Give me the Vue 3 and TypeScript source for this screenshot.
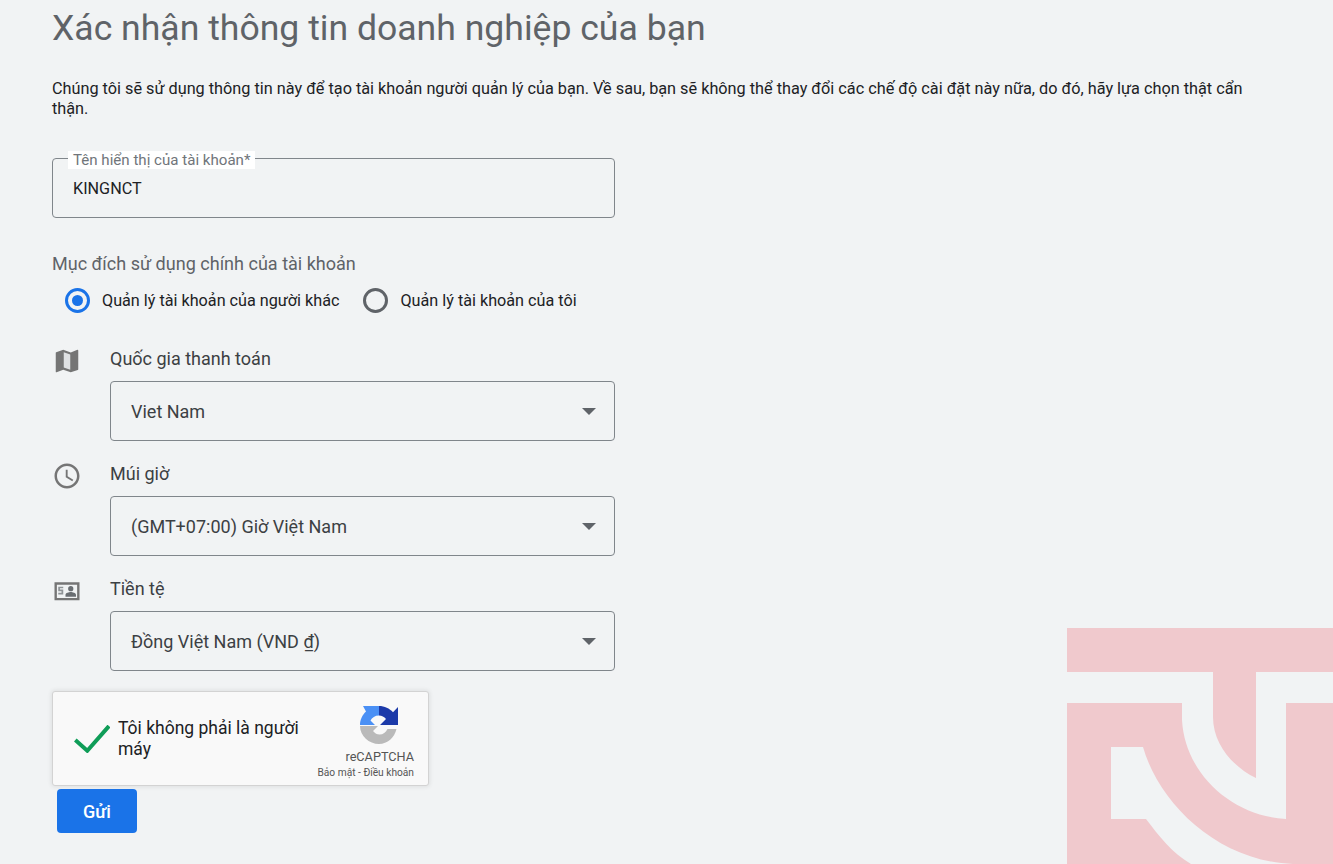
<script setup lang="ts">
interface Field { label: string; value: string; icon: string }
const fields: Field[] = [
  { label: 'Quốc gia thanh toán', value: 'Viet Nam', icon: 'map' },
  { label: 'Múi giờ', value: '(GMT+07:00) Giờ Việt Nam', icon: 'clock' },
  { label: 'Tiền tệ', value: 'Đồng Việt Nam (VND ₫)', icon: 'money' }
]
</script>

<template>
  <div class="page">
    <svg class="watermark" viewBox="0 0 266 236" aria-hidden="true">
      <path d="M0 0H266V44H189V150C168 140 146 118 146 89V44H0Z" />
      <path d="M0 75H115V92C118 146 165 188 219 191V75H266V236H226C150 233 92 175 76 119H44V191H79C92 208 105 225 124 236H0Z" />
    </svg>
    <h1 class="title">Xác nhận thông tin doanh nghiệp của bạn</h1>
    <p class="intro">Chúng tôi sẽ sử dụng thông tin này để tạo tài khoản người quản lý của bạn. Về sau, bạn sẽ không thể thay đổi các chế độ cài đặt này nữa, do đó, hãy lựa chọn thật cẩn thận.</p>

    <div class="name-box">
      <span class="float-label">Tên hiển thị của tài khoản*</span>
      <span class="name-value">KINGNCT</span>
    </div>

    <div class="purpose">Mục đích sử dụng chính của tài khoản</div>
    <div class="radios">
      <label class="radio"><span class="dot on"></span>Quản lý tài khoản của người khác</label>
      <label class="radio"><span class="dot"></span>Quản lý tài khoản của tôi</label>
    </div>

    <div v-for="f in fields" :key="f.label" class="field">
      <svg class="icon" viewBox="0 0 24 24">
        <template v-if="f.icon === 'map'">
          <path fill="#757575" d="M20.5 3l-.16.03L15 5.1 9 3 3.36 4.9c-.21.07-.36.25-.36.48V20.5c0 .28.22.5.5.5l.16-.03L9 18.9l6 2.1 5.64-1.9c.21-.07.36-.25.36-.48V3.5c0-.28-.22-.5-.5-.5z" />
          <path fill="#dfe1e3" d="M9.4 5l5.2 1.8v12.2l-5.2-1.8z" />
        </template>
        <path v-else-if="f.icon === 'clock'" fill="#757575" d="M11.99 2C6.47 2 2 6.48 2 12s4.47 10 9.99 10C17.52 22 22 17.52 22 12S17.52 2 11.99 2zM12 20c-4.42 0-8-3.58-8-8s3.58-8 8-8 8 3.58 8 8-3.58 8-8 8zm.5-13H11v6l5.25 3.15.75-1.23-4.5-2.67z" />
        <template v-else>
          <path fill="#757575" d="M2 5h20v14.4H2zm1.9 1.9v10.6h16.2V6.9z" />
          <path fill="#8f9396" d="M5 8.5h4v1.3H6.4v1H9v3.9H5v-1.3h2.6v-1.3H5z" />
          <path fill="#6a6e72" d="M15 8a2.1 2.1 0 1 1 0 4.200a2.100 2.100 0 0 1 0-4.200zm-4.200 8.600v-1.600c0-1.400 2.800-2.200 4.200-2.200s4.200.8 4.200 2.200v1.600z" />
        </template>
      </svg>
      <div class="field-main">
        <div class="field-label">{{ f.label }}</div>
        <div class="select">
          <span>{{ f.value }}</span>
          <span class="caret"></span>
        </div>
      </div>
    </div>

    <div class="captcha">
      <svg class="check" viewBox="0 0 36 28"><path d="M1.300 15 13.300 25.700 35 1" /></svg>
      <div class="captcha-text">Tôi không phải là người máy</div>
      <div class="captcha-brand">
        <svg class="recap" viewBox="0 0 38 38">
          <path fill="#4a90f5" d="M3 0H19V9.500C15 9.500 12 11.500 10.500 14.500L15 19H0C0 13.500 2.500 9 6 5.500Z" />
          <path fill="#1c3aa9" d="M19 0C24.500 0 29.500 2.400 33 6.200L38 1V19H20L26 13C24.300 10.800 21.800 9.500 19 9.500Z" />
          <path fill="#bababa" d="M0 20H18L13 25C15 27.500 17 28.500 19.500 28.500C23 28.500 26 26.500 27.500 23H36.500C34.500 31.500 27.500 38 19 38C9 38 0 30 0 20Z" />
        </svg>
        <div class="brand-name">reCAPTCHA</div>
        <div class="brand-links">Bảo mật - Điều khoản</div>
      </div>
    </div>
    <button class="submit" type="button">Gửi</button>
  </div>
</template>

<style>
html, body { margin: 0; background: #f1f3f4; }
</style>

<style scoped>
.page {
  position: relative;
  box-sizing: border-box;
  height: 864px;
  overflow: hidden;
  padding: 6px 0 0 52px;
  background: #f1f3f4;
  font-family: Roboto, "Noto Sans", sans-serif;
  color: #3c4043;
}
.watermark { position: absolute; left: 1067px; top: 628px; width: 266px; height: 236px; }
.watermark path { fill: #f0c9cd; }
.title { margin: 0; font-size: 35.6px; line-height: 44px; font-weight: 400; color: #5f6368; }
.intro { margin: 29px 0 0; width: 1200px; font-size: 16.25px; line-height: 20px; color: #202124; }
.name-box {
  position: relative;
  box-sizing: border-box;
  width: 563px;
  height: 60px;
  margin-top: 39px;
  padding: 20px 20px 0;
  border: 1px solid #80868b;
  border-radius: 4px;
}
.float-label {
  position: absolute;
  left: 15px;
  top: -8px;
  padding: 0 5px;
  background: #fff;
  font-size: 15.1px;
  line-height: 18px;
  color: #70757a;
}
.name-value { font-size: 16.2px; line-height: 19px; color: #202124; display: block; }
.purpose { margin-top: 36px; font-size: 18.05px; line-height: 20px; color: #5f6368; }
.radios { display: flex; gap: 24px; margin: 14px 0 0 13px; }
.radio { display: flex; align-items: center; gap: 12px; font-size: 16.2px; line-height: 24px; color: #202124; }
.dot {
  box-sizing: border-box;
  width: 25px;
  height: 25px;
  border: 3px solid #5f6368;
  border-radius: 50%;
  padding: 4px;
  background-clip: content-box;
}
.dot.on { border-color: #1a73e8; background-color: #1a73e8; }
.field { display: flex; gap: 28px; width: 563px; height: 115px; }
.radios + .field { margin-top: 33px; }
.icon { flex: none; width: 30px; height: 30px; }
.field-main { flex: 1; }
.field-label { font-size: 18px; line-height: 20px; color: #3c4043; margin-top: 3px; }
.select {
  box-sizing: border-box;
  height: 60px;
  margin-top: 12px;
  padding: 0 20px;
  display: flex;
  align-items: center;
  justify-content: space-between;
  border: 1px solid #80868b;
  border-radius: 4px;
  font-size: 18px;
}
.caret { width: 0; height: 0; border: 7px solid transparent; border-top-color: #5f6368; border-bottom: 0; margin-right: -2px; }
.captcha {
  box-sizing: border-box;
  width: 377px;
  height: 95px;
  display: flex;
  align-items: center;
  background: #f9f9f9;
  border: 1px solid #d3d3d3;
  border-radius: 3px;
  box-shadow: 0 0 4px 1px rgba(0, 0, 0, .08);
}
.check { flex: none; width: 36px; height: 28px; margin: 0 8px 0 21px; fill: none; stroke: #0f9d58; stroke-width: 4; }
.captcha-text { width: 200px; font-size: 17.5px; line-height: 21px; color: #202124; }
.captcha-brand { align-self: flex-start; margin-left: auto; margin-right: 14px; display: flex; flex-direction: column; align-items: flex-end; padding-top: 14px; }
.recap { width: 38px; height: 38px; margin-right: 16px; }
.brand-name { font-size: 12.7px; line-height: 14px; color: #555; margin-top: 6px; }
.brand-links { font-size: 10.2px; line-height: 12px; color: #555; margin-top: 3px; white-space: nowrap; }
.submit {
  display: block;
  width: 80px;
  height: 44px;
  margin: 3px 0 0 5px;
  border: 0;
  border-radius: 4px;
  background: #1a73e8;
  color: #fff;
  font: 500 18px Roboto, sans-serif;
}
</style>
